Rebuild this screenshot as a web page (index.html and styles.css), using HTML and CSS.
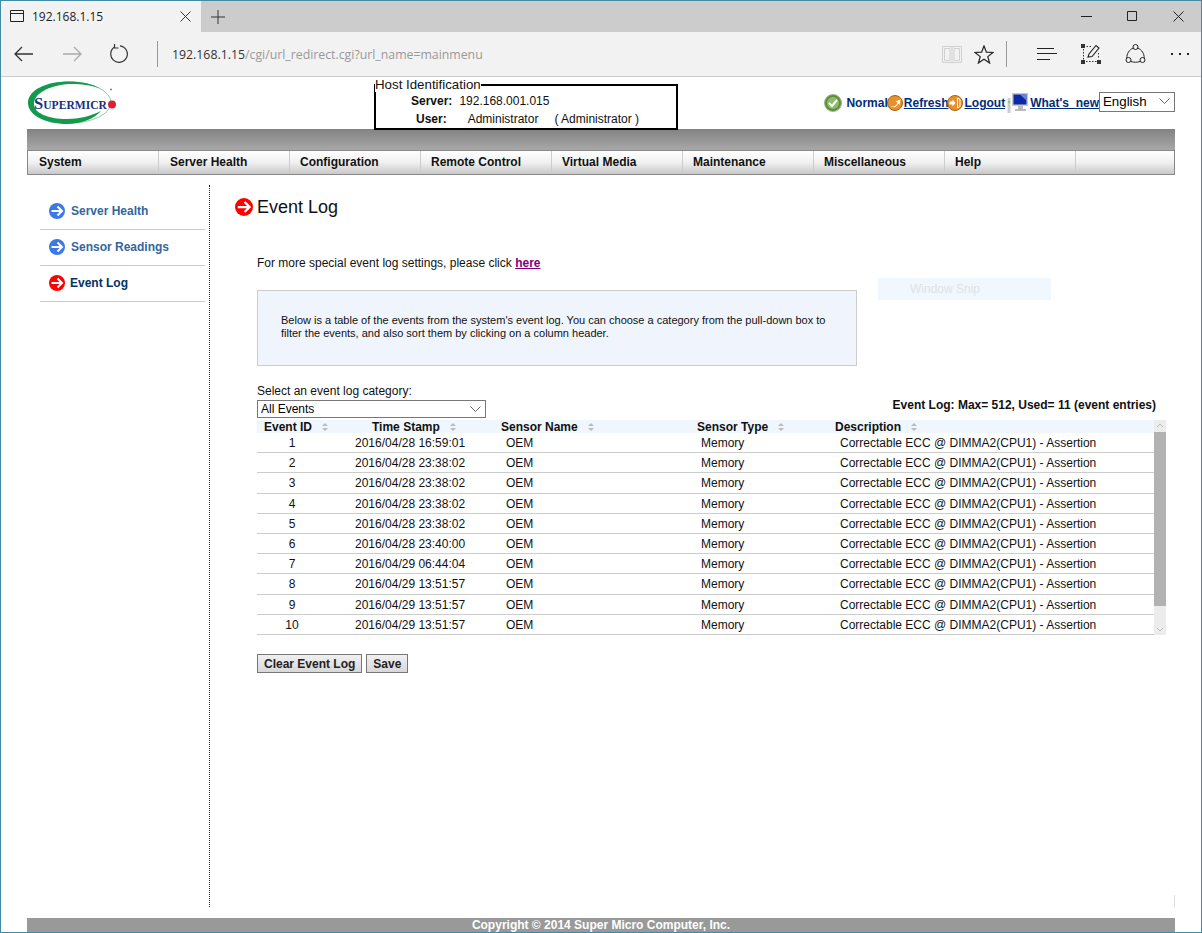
FILE: index.html
```html
<!DOCTYPE html>
<html lang="en">
<head>
    <meta charset="UTF-8">
    <title>192.168.1.15</title>
    <link rel="stylesheet" href="styles.css">
</head>
<body>
    <div class="tabbar">
        <div class="tab">
            <svg class="tab-icon" width="15" height="13" viewBox="0 0 15 13"><path d="M.5.5h13v11H.5zM.5 3.500h13" fill="none" stroke="#222"/></svg>
            <span class="tab-title">192.168.1.15</span>
            <svg class="tab-close" width="11" height="11" viewBox="0 0 11 11"><path d="M.5.5l10 10M10.500.5l-10 10" stroke="#333"/></svg>
        </div>
        <svg class="tab-new" width="14" height="14" viewBox="0 0 14 14"><path d="M7 0v14M0 7h14" stroke="#333"/></svg>
        <div class="win-buttons">
            <svg width="11" height="11" viewBox="0 0 11 11"><path d="M0 5.500h11" stroke="#222"/></svg>
            <svg width="11" height="11" viewBox="0 0 11 11"><path d="M.5.5h9v9h-9z" fill="none" stroke="#222"/></svg>
            <svg width="11" height="11" viewBox="0 0 11 11"><path d="M.5.5l10 10M10.500.5l-10 10" stroke="#222"/></svg>
        </div>
    </div>
    <div class="toolbar">
        <svg class="tool-back" width="20" height="16" viewBox="0 0 20 16"><path d="M19 8H1M8 1L1 8l7 7" fill="none" stroke="#333" stroke-width="1.300"/></svg>
        <svg class="tool-fwd" width="20" height="16" viewBox="0 0 20 16"><path d="M1 8h18M12 1l7 7-7 7" fill="none" stroke="#aaa" stroke-width="1.300"/></svg>
        <svg class="tool-reload" width="20" height="20" viewBox="0 0 20 20"><path d="M6 2.800A8.300 8.300 0 1 0 11 1.800M5.500 0v4h4" fill="none" stroke="#333" stroke-width="1.200"/></svg>
        <div class="tool-sep"></div>
        <div class="address"><span class="addr-host">192.168.1.15</span>/cgi/url_redirect.cgi?url_name=mainmenu</div>
        <svg class="tool-book" width="20" height="19" viewBox="0 0 20 19"><path d="M.5 1.500h9l.5 1 .5-1h9v16h-9l-.5 1-.5-1h-9zM10 2.500v15M2.500 3.500h5.500v12H2.500zM12 3.500h5.500v12H12z" fill="none" stroke="#d0d0d0"/></svg>
        <svg class="tool-star" width="20" height="19" viewBox="0 0 20 19"><path d="M10 1l2.400 6.200 6.600.3-5.200 4.100 1.800 6.400L10 14.300 4.400 18l1.800-6.400L1 7.500l6.600-.3z" fill="none" stroke="#222" stroke-width="1.200"/></svg>
        <div class="tool-sep tool-sep-right"></div>
        <svg class="tool-hub" width="20" height="15" viewBox="0 0 20 15"><path d="M0 1.500h17M0 6.500h20M0 12.500h13" stroke="#222" stroke-width="1.100"/></svg>
        <svg class="tool-note" width="20" height="20" viewBox="0 0 20 20"><path d="M2.500 2.500h9M2.500 5v12M5 17.500h12.500M17.500 9v6" fill="none" stroke="#333" stroke-dasharray="1.500 1.500"/><path d="M0 0h4v4H0zM0 16h4v4H0zM16 16h4v4h-4z" fill="#333"/><path d="M7 13l1-3 7-8.500 3 2.500-7 8.500z" fill="none" stroke="#222" stroke-width="1.100"/></svg>
        <svg class="tool-share" width="21" height="20" viewBox="0 0 21 20"><circle cx="10.500" cy="3" r="2.500" fill="none" stroke="#222"/><circle cx="3.500" cy="16" r="2.500" fill="none" stroke="#222"/><circle cx="17.500" cy="16" r="2.500" fill="none" stroke="#222"/><path d="M8.200 4C4 6 1.800 9.500 1.800 14M12.800 4c4.200 2 6.400 5.500 6.400 10M6 17.500c3 1 6 1 9 0" fill="none" stroke="#222"/></svg>
        <div class="tool-more"><i></i><i></i><i></i></div>
    </div>

    <div class="page">
        <header class="site-head">
            <svg class="logo" width="90" height="46" viewBox="0 0 90 46">
                <ellipse cx="43" cy="22.500" rx="41" ry="20.500" fill="none" stroke="#5fb98a" stroke-width=".7"/>
                <path d="M42 1.500c12 0 24 2.500 31 7C63 5 54 4 46 4 26 4 7 12 7 24c0 9 14 15 33 15 12 0 24-3 34-8-7 8-20 13-34 13C18 44 1 35 1 23 1 10 19 1.500 42 1.500z" fill="#149a4d"/>
                <text x="7" y="29" class="logo-text"><tspan class="logo-cap">S</tspan>UPERMICR</text>
                <circle cx="85" cy="24.500" r="4" fill="#e0202e"/>
                <circle cx="84" cy="9.500" r="1" fill="#6a7fb0"/>
            </svg>
            <fieldset class="host-box">
                <legend>Host Identification</legend>
                <div class="host-row">
                    <b class="host-label host-label-server">Server:</b>
                    <span class="host-ip">192.168.001.015</span>
                </div>
                <div class="host-row">
                    <b class="host-label host-label-user">User:</b>
                    <span class="host-user">Administrator</span>
                    <span class="host-role">( Administrator )</span>
                </div>
            </fieldset>
            <div class="status-bar">
                <svg class="status-icon" width="18" height="18" viewBox="0 0 18 18"><circle cx="9" cy="9" r="8.500" fill="#5f8f3c" stroke="#9ab98a"/><circle cx="9" cy="9" r="6" fill="#8bbd6a"/><path d="M5 9l3 3 5-6" fill="none" stroke="#fff" stroke-width="2"/></svg>
                <span class="status-text">Normal</span>
                <svg class="status-icon status-orange" width="16" height="16" viewBox="0 0 16 16"><circle cx="8" cy="8" r="7.500" fill="#e8912a" stroke="#a86410"/><path d="M3.500 11.500c3 .5 6-.5 7-4l-2-1 5-2-1 5.500-1.200-1.500c-1 3-4 5-7.800 3z" fill="#fff"/></svg>
                <a class="status-link" href="#">Refresh</a>
                <svg class="status-icon status-orange" width="16" height="16" viewBox="0 0 16 16"><circle cx="8" cy="8" r="7.500" fill="#e8912a" stroke="#a86410"/><path d="M2.500 6.500h3v-2l3 3.500-3 3.500v-2h-3z" fill="#fff"/><path d="M10.500 3l2.500 1.500v7L10.500 13z" fill="none" stroke="#fff"/></svg>
                <a class="status-link" href="#">Logout</a>
                <svg class="status-icon status-monitor" width="21" height="21" viewBox="0 0 21 21"><rect x=".5" y="5" width="3" height="15" fill="#ccc"/><rect x="1.500" y="8" width="1" height="2" fill="#3c3"/><rect x="5" y="0" width="16" height="13" fill="#c8c8c8"/><rect x="6.500" y="1.500" width="13" height="10" fill="#0a2aa8"/><path d="M13 1.500h6.500v6z" fill="#6d86d8"/><path d="M11 13h5v3h3v2H8v-2h3z" fill="#bbb"/></svg>
                <a class="status-link" href="#">What's&nbsp;&nbsp;new</a>
                <span class="select-wrap lang-wrap">
                    <select class="lang-select"><option>English</option></select>
                    <svg class="chevron" width="11" height="6" viewBox="0 0 11 6"><path d="M.5.5l5 5 5-5" fill="none" stroke="#666"/></svg>
                </span>
            </div>
        </header>
        <div class="gray-bar"></div>
        <nav class="main-menu">
            <a href="#">System</a>
            <a href="#">Server Health</a>
            <a href="#">Configuration</a>
            <a href="#">Remote Control</a>
            <a href="#">Virtual Media</a>
            <a href="#">Maintenance</a>
            <a href="#">Miscellaneous</a>
            <a href="#">Help</a>
            <a href="#"></a>
        </nav>

        <div class="main">
            <aside class="sidebar">
                <a class="side-item" href="#">
                    <svg width="16" height="16" viewBox="0 0 16 16"><circle cx="8" cy="8" r="8" fill="#3c78e8"/><path d="M2.500 8h10M8.500 3.500L13 8l-4.500 4.500" fill="none" stroke="#fff" stroke-width="2"/></svg>
                    Server Health
                </a>
                <a class="side-item" href="#">
                    <svg width="16" height="16" viewBox="0 0 16 16"><circle cx="8" cy="8" r="8" fill="#3c78e8"/><path d="M2.500 8h10M8.500 3.500L13 8l-4.500 4.500" fill="none" stroke="#fff" stroke-width="2"/></svg>
                    Sensor Readings
                </a>
                <a class="side-item side-active" href="#">
                    <svg width="16" height="16" viewBox="0 0 16 16"><circle cx="8" cy="8" r="8" fill="#f00"/><path d="M2.500 8h10M8.500 3.500L13 8l-4.500 4.500" fill="none" stroke="#fff" stroke-width="2"/></svg>
                    Event Log
                </a>
            </aside>
            <section class="content">
                <h1 class="page-title">
                    <svg width="18" height="18" viewBox="0 0 16 16"><circle cx="8" cy="8" r="8" fill="#f00"/><path d="M2.500 8h10M8.500 3.500L13 8l-4.500 4.500" fill="none" stroke="#fff" stroke-width="2"/></svg>
                    Event Log
                </h1>
                <div class="content-body">
                    <p class="more-link">For more special event log settings, please click <a href="#">here</a></p>
                    <div class="info-box">Below is a table of the events from the system's event log. You can choose a category from the pull-down box to filter the events, and also sort them by clicking on a column header.</div>
                    <div class="filter-row">
                        <div class="filter">
                            <label>Select an event log category:</label>
                            <span class="select-wrap">
                                <select class="cat-select"><option>All Events</option></select>
                                <svg class="chevron" width="11" height="6" viewBox="0 0 11 6"><path d="M.5.5l5 5 5-5" fill="none" stroke="#666"/></svg>
                            </span>
                        </div>
                        <b class="log-summary">Event Log: Max= 512, Used= 11 (event entries)</b>
                    </div>
                    <div class="log-wrap">
                        <div class="log-table" id="logTable">
                            <div class="log-head">
                                <div class="th th-id">Event ID<i class="sort"></i></div>
                                <div class="th th-time">Time Stamp<i class="sort"></i></div>
                                <div class="th">Sensor Name<i class="sort"></i></div>
                                <div class="th">Sensor Type<i class="sort"></i></div>
                                <div class="th">Description<i class="sort"></i></div>
                            </div>
                        </div>
                        <div class="scrollbar">
                            <svg class="sb-arrow" width="12" height="12" viewBox="0 0 12 12"><path d="M3 7l3-3 3 3" fill="none" stroke="#bbb"/></svg>
                            <div class="sb-thumb"></div>
                            <div class="sb-track"></div>
                            <svg class="sb-arrow" width="12" height="12" viewBox="0 0 12 12"><path d="M3 5l3 3 3-3" fill="none" stroke="#bbb"/></svg>
                        </div>
                    </div>
                    <div class="actions">
                        <button>Clear Event Log</button>
                        <button>Save</button>
                    </div>
                </div>
                <div class="snip">Window Snip</div>
                <div class="edge-tick"></div>
            </section>
        </div>
        <footer class="site-foot">Copyright © 2014 Super Micro Computer, Inc.</footer>
    </div>

<script>
var logRows = [
    ['1', '2016/04/28 16:59:01'],
    ['2', '2016/04/28 23:38:02'],
    ['3', '2016/04/28 23:38:02'],
    ['4', '2016/04/28 23:38:02'],
    ['5', '2016/04/28 23:38:02'],
    ['6', '2016/04/28 23:40:00'],
    ['7', '2016/04/29 06:44:04'],
    ['8', '2016/04/29 13:51:57'],
    ['9', '2016/04/29 13:51:57'],
    ['10', '2016/04/29 13:51:57']
];
var table = document.getElementById('logTable');
logRows.forEach(function (r) {
    var row = document.createElement('div');
    row.className = 'log-row';
    row.innerHTML = '<div class="td td-id">' + r[0] + '</div>' +
        '<div class="td td-time">' + r[1] + '</div>' +
        '<div class="td td-name">OEM</div>' +
        '<div class="td td-type">Memory</div>' +
        '<div class="td td-desc">Correctable ECC @ DIMMA2(CPU1) - Assertion</div>';
    table.appendChild(row);
});
</script>
</body>
</html>
```

FILE: styles.css
```css
* {
    box-sizing: border-box;
}
html, body {
    margin: 0;
    height: 933px;
    overflow: hidden;
}
body {
    font-family: "Liberation Sans", Arial, sans-serif;
    font-size: 12px;
    color: #111;
    background-color: #fff;
    border: 1px solid #3f8ba8;
}

/* browser chrome */
.tabbar {
    height: 31px;
    background-color: #ccc;
    display: flex;
    align-items: center;
}
.tab {
    width: 200px;
    height: 31px;
    background-color: #f2f2f2;
    display: flex;
    align-items: center;
    padding-left: 9px;
}
.tab-title {
    margin-left: 7px;
    font-family: "Open Sans", sans-serif;
    font-size: 12px;
    color: #222;
    width: 148px;
}
.tab-new {
    margin-left: 10px;
}
.win-buttons {
    margin-left: auto;
    display: flex;
    gap: 35px;
    padding-right: 17px;
}
.toolbar {
    height: 45px;
    background-color: #f2f2f2;
    border-bottom: 1px solid #ccc;
    display: flex;
    align-items: center;
}
.tool-back {
    margin-left: 13px;
}
.tool-fwd {
    margin-left: 28px;
}
.tool-reload {
    margin-left: 27px;
}
.tool-sep {
    width: 1px;
    height: 26px;
    background-color: #999;
    margin-left: 28px;
}
.address {
    width: 770px;
    margin-left: 14px;
    font-family: "Open Sans", sans-serif;
    font-size: 12.3px;
    color: #999;
}
.addr-host {
    color: #333;
}
.tool-star {
    margin-left: 12px;
}
.tool-sep-right {
    margin-left: 12px;
}
.tool-hub {
    margin-left: 30px;
}
.tool-note {
    margin-left: 24px;
}
.tool-share {
    margin-left: 24px;
}
.tool-more {
    display: flex;
    gap: 6px;
    margin-left: 25px;
}
.tool-more i {
    width: 2px;
    height: 2px;
    background-color: #222;
}

/* page */
.page {
    padding: 0 26px;
}
.site-head {
    height: 52px;
    display: flex;
}
.logo {
    margin-top: 3px;
    flex: none;
}
.logo-text {
    font-family: "Liberation Serif", serif;
    font-size: 11.6px;
    font-weight: bold;
    fill: #1b2f7a;
}
.logo-cap {
    font-size: 16.5px;
}
.host-box {
    margin: 1px 0 0 257px;
    padding: 0;
    width: 304px;
    height: 52px;
    border: 2px solid #000;
    flex: none;
}
.host-box legend {
    padding: 0;
    margin-left: -1px;
    font-size: 13.3px;
    line-height: 14px;
}
.host-row {
    height: 18px;
    display: flex;
    align-items: center;
    white-space: pre;
}
.host-label-server {
    margin-left: 35px;
}
.host-ip {
    margin-left: 7px;
}
.host-label-user {
    margin-left: 40px;
}
.host-user {
    margin-left: 21px;
}
.host-role {
    margin-left: 16px;
}
.status-bar {
    margin-left: auto;
    margin-top: 16px;
    display: flex;
    align-items: center;
    height: 20px;
    font-weight: bold;
    color: #002d7a;
    white-space: nowrap;
}
.status-text {
    margin-left: 4px;
}
.status-orange {
    margin-left: -1px;
}
.status-link {
    color: #002d7a;
    margin-left: 1px;
}
.status-monitor {
    margin-left: 2px;
    margin-right: 1px;
}
.select-wrap {
    display: block;
    position: relative;
}
.chevron {
    position: absolute;
    right: 5px;
    top: 6px;
}
.lang-wrap {
    margin-top: -2px;
}
.lang-select, .cat-select {
    display: block;
    appearance: none;
    font-family: "Liberation Sans", sans-serif;
    border: 1px solid #777;
    background-color: #fff;
    padding: 0 0 0 3px;
    border-radius: 0;
}
.lang-select {
    width: 76px;
    height: 20px;
    font-size: 13.3px;
    padding-bottom: 2px;
}
.cat-select {
    width: 229px;
    height: 18px;
    font-size: 12px;
}
.gray-bar {
    height: 21px;
    background: linear-gradient(to bottom, #828282, #a8a8a8);
}
.main-menu {
    height: 25px;
    display: flex;
    border: 1px solid #888;
    background: linear-gradient(to bottom, #fff, #f0f0f0 50%, #c8c8c8);
}
.main-menu a {
    width: 131px;
    padding-left: 11px;
    line-height: 22px;
    color: #111;
    font-weight: bold;
    text-decoration: none;
    border-right: 1px solid #ccc;
}
.main-menu a:nth-child(n+3) {
    padding-left: 10px;
}
.main-menu a:last-child {
    border-right: none;
    width: auto;
    flex: 1;
}

/* sidebar and content */
.main {
    display: flex;
    margin: 10px -26px 0;
    height: 722px;
    position: relative;
}
.sidebar {
    width: 209px;
    flex: none;
    padding: 9px 4px 0 39px;
    border-right: 1px dotted #224;
}
.side-item {
    height: 36px;
    display: flex;
    align-items: center;
    gap: 6px;
    padding: 0 0 2px 9px;
    border-bottom: 1px solid #ccc;
    font-weight: bold;
    color: #33669c;
    text-decoration: none;
}
.side-item svg {
    flex: none;
}
.side-active {
    color: #003366;
    gap: 5px;
}
.content {
    flex: 1;
    padding-left: 25px;
}
.page-title {
    margin: 12px 0 0;
    height: 20px;
    display: flex;
    align-items: center;
    gap: 4px;
    font-size: 18px;
    font-weight: normal;
    line-height: 20px;
}
.content-body {
    margin-left: 22px;
    width: 909px;
}
.more-link {
    margin: 39px 0 0;
    line-height: 14px;
}
.more-link a {
    color: #800080;
    font-weight: bold;
}
.info-box {
    margin-top: 20px;
    width: 600px;
    height: 76px;
    padding: 23px 23px 0;
    background-color: #f0f5fd;
    border: 1px solid #ccc;
    font-size: 11px;
    line-height: 13px;
}
.filter-row {
    margin-top: 18px;
    display: flex;
    align-items: flex-end;
    justify-content: space-between;
    padding-right: 10px;
}
.filter label {
    display: block;
    line-height: 14px;
    margin-bottom: 2px;
}
.log-summary {
    margin-bottom: 6px;
    line-height: 14px;
}
.log-wrap {
    margin-top: 2px;
    display: flex;
}
.log-table {
    width: 897px;
}
.log-head, .log-row {
    display: grid;
    grid-template-columns: 70px 174px 196px 138px 1fr;
}
.log-head {
    height: 13px;
    background-color: #f0f6fd;
    font-weight: bold;
    line-height: 15px;
}
.th {
    white-space: nowrap;
}
.th-id {
    padding-left: 7px;
}
.th-time {
    padding-left: 45px;
}
.sort {
    display: inline-block;
    position: relative;
    margin-left: 10px;
    width: 6px;
    height: 8px;
}
.sort::before, .sort::after {
    content: "";
    position: absolute;
    left: 0;
    border-left: 3px solid transparent;
    border-right: 3px solid transparent;
}
.sort::before {
    top: 0;
    border-bottom: 3px solid #bbb;
}
.sort::after {
    bottom: 0;
    border-top: 3px solid #bbb;
}
.log-row {
    height: 20.2px;
    line-height: 21px;
    border-bottom: 1px solid #ccc;
}
.td-id {
    text-align: center;
}
.td-time {
    padding-left: 28px;
}
.td-name {
    padding-left: 5px;
}
.td-type {
    padding-left: 4px;
}
.td-desc {
    padding-left: 5px;
}
.scrollbar {
    width: 12px;
    height: 215px;
    display: flex;
    flex-direction: column;
    background-color: #ececec;
}
.sb-arrow {
    flex: none;
}
.sb-thumb {
    height: 174px;
    background-color: #b2b2b2;
}
.sb-track {
    flex: 1;
}
.actions {
    margin-top: 19px;
    display: flex;
    gap: 4px;
}
.actions button {
    height: 19px;
    padding: 0 6px;
    font-family: "Liberation Sans", sans-serif;
    font-size: 12px;
    font-weight: bold;
    color: #222;
    background: linear-gradient(to bottom, #f0f0f0, #d8d8d8);
    border: 1px solid #777;
}
.snip {
    position: absolute;
    left: 877px;
    top: 93px;
    width: 173px;
    height: 22px;
    padding-left: 32px;
    background-color: #f0f7fe;
    color: #e2e2e2;
    line-height: 22px;
}
.edge-tick {
    position: absolute;
    left: 1173px;
    top: 710px;
    width: 1px;
    height: 12px;
    background-color: #ddd;
}
.site-foot {
    margin-top: 11px;
    height: 14px;
    background-color: #999;
    color: #fff;
    font-weight: bold;
    text-align: center;
    line-height: 14px;
}
```
